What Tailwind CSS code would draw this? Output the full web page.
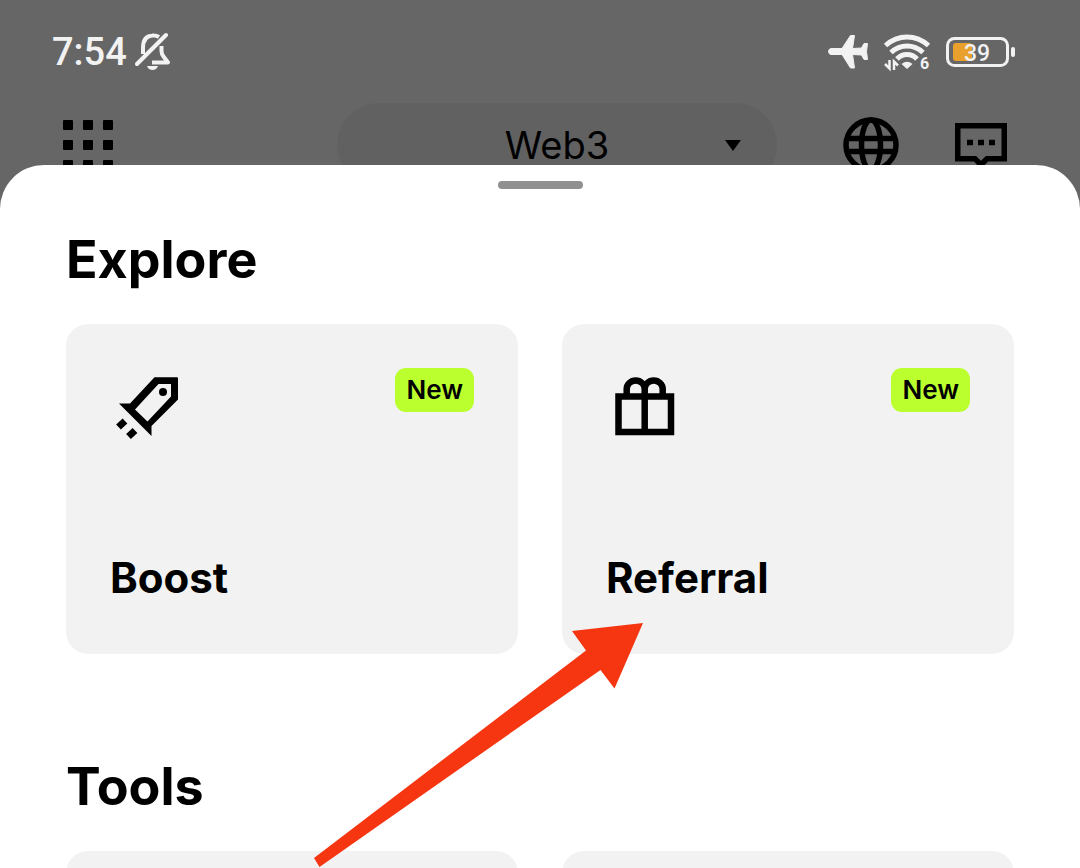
<!DOCTYPE html>
<html lang="en">
<head>
  <meta charset="UTF-8">
  <meta name="viewport" content="width=device-width, initial-scale=1.0">
  <title>Web3 - Explore</title>
  <script src="https://cdn.jsdelivr.net/npm/@tailwindcss/browser@4"></script>
</head>
<body class="h-screen overflow-hidden bg-[#666] font-['Inter',sans-serif] text-black flex flex-col">
  <!-- Status bar -->
  <div class="shrink-0 h-[103px] pt-px pl-[52px] pr-16 flex items-center justify-between font-['Roboto',sans-serif] text-[#f2f2f2]">
    <div class="flex items-center gap-2">
      <span class="text-[38px] leading-10 font-medium">7:54</span>
      <svg class="w-9 h-10" viewBox="0 0 36 40" fill="none" stroke="currentColor" stroke-width="4" stroke-linecap="round" stroke-linejoin="round">
        <path d="M2 32 31 3"/>
        <path d="M8 22v-6C8 8 11 4 17 3.500q4-.5 7 1.500" stroke-linecap="butt"/>
        <path d="M26.500 14v5q0 3 2 5.500l4.500 6H17" stroke-linecap="butt"/>
        <path d="M12 34h11q-1.500 4-5.500 4T12 34z" fill="currentColor" stroke="none"/>
      </svg>
    </div>
    <div class="flex items-center gap-[15px]">
      <svg class="w-10 h-9" viewBox="0 0 40 36" fill="currentColor" stroke="currentColor" stroke-width="1" stroke-linejoin="round">
        <path d="M3 14.500h11L22.500 1.500h4L24.500 14.500l9-.5 2.500-4.500h3.500l-1 8 1 8H36L33.500 21l-9-.5 2 13.500h-4L14 20.500H3q-2.500-.5-2.500-3t2.500-3z"/>
      </svg>
      <svg class="w-12 h-[38px] overflow-visible" viewBox="0 0 48 38" fill="none" stroke="currentColor" stroke-width="5">
        <path d="M2.500 12.500Q12 4 24 4t21.500 8.500"/>
        <path d="M8 19.500q7-6.500 16-6.500t16 6.500"/>
        <path d="M14 26q4-4.500 10-4.500T34 26"/>
        <path d="M18.500 31q5.500-4.500 11 0L24 36z" fill="currentColor" stroke="none"/>
        <path d="M6.500 27v8.500L2 31M11 37v-8.500l4 4" stroke-width="2.500"/>
        <text x="37" y="36" font-size="16" font-weight="700" fill="currentColor" stroke="none">6</text>
      </svg>
      <svg class="w-[70px] h-[30px] overflow-visible" viewBox="0 0 70 30" fill="none">
        <rect x="1.500" y="1.500" width="60" height="27" rx="7" stroke="currentColor" stroke-width="3"/>
        <rect x="7" y="6" width="19" height="18" rx="3" fill="#e9a02c"/>
        <rect x="65" y="10" width="4" height="10" rx="2" fill="currentColor"/>
        <text x="18" y="24" font-size="23" font-weight="500" fill="currentColor">39</text>
      </svg>
    </div>
  </div>

  <!-- Top bar, half hidden by the sheet -->
  <header class="shrink-0 h-[84px] pl-[63px] pr-[73px] flex items-center">
    <button type="button" aria-label="Menu">
      <svg class="w-[50px] h-[50px]" viewBox="0 0 50 50">
        <rect width="10" height="10" rx="1"/><rect x="20" width="10" height="10" rx="1"/><rect x="40" width="10" height="10" rx="1"/>
        <rect y="20" width="10" height="10" rx="1"/><rect x="20" y="20" width="10" height="10" rx="1"/><rect x="40" y="20" width="10" height="10" rx="1"/>
        <rect y="40" width="10" height="10" rx="1"/><rect x="20" y="40" width="10" height="10" rx="1"/><rect x="40" y="40" width="10" height="10" rx="1"/>
      </svg>
    </button>
    <button type="button" class="relative flex-1 h-full ml-56 mr-[66px] rounded-full bg-[#616161] text-[38px] leading-10">
      Web3
      <svg class="absolute right-9 top-1/2 -translate-y-1/2 w-4 h-3" viewBox="0 0 16 12"><path d="M0 1h16L8 12z"/></svg>
    </button>
    <div class="flex items-center gap-14">
      <button type="button" aria-label="Language">
        <svg class="w-14 h-14" viewBox="0 0 56 56" fill="none" stroke="currentColor" stroke-width="5.500">
          <circle cx="28" cy="28" r="25"/>
          <ellipse cx="28" cy="28" rx="9.500" ry="25"/>
          <path d="M4 21.500h48M4 34.500h48"/>
        </svg>
      </button>
      <button type="button" aria-label="Messages">
        <svg class="w-[52px] h-11" viewBox="0 0 52 44" fill="none" stroke="currentColor" stroke-width="5.500">
          <path d="M2.750 2.750h46.500v33H32l-6 6-6-6H2.750z"/>
          <path d="M12 19.500h6M23 19.500h6M34 19.500h6"/>
        </svg>
      </button>
    </div>
  </header>

  <!-- Bottom sheet -->
  <main class="relative grow shrink-0 -mt-[22px] pt-4 px-[66px] pb-11 rounded-t-[44px] bg-white">
    <div class="w-[85px] h-2 mx-auto rounded-full bg-[#909090]"></div>

    <section class="mt-[38px]">
      <h2 class="text-[52px] leading-[66px] font-bold">Explore</h2>
      <div class="grid grid-cols-2 gap-11 mt-[31px]">
        <a href="#boost" class="h-[330px] p-11 rounded-[22px] bg-[#f2f2f2] flex flex-col justify-between">
          <div class="flex items-start justify-between">
            <svg class="w-[77px] h-[77px]" viewBox="0 0 77 77">
              <path fill-rule="evenodd" d="M44.500 9.300h22.500q1 0 1 1V31.500L41.500 58v10L9 35.500h11zM48.500 16 25 41.500 37.500 53.500 61 28.500V16z"/>
              <circle cx="53" cy="24" r="4"/>
              <path d="M8.500 59l6.500-6M18.500 68.500l6.500-6" stroke="currentColor" stroke-width="7"/>
            </svg>
            <span class="h-11 px-[11px] rounded-[11px] bg-[#bcff2f] text-[26px] leading-[44px] font-semibold">New</span>
          </div>
          <h3 class="text-[42px] leading-[64px] font-bold">Boost</h3>
        </a>
        <a href="#referral" class="h-[330px] p-11 rounded-[22px] bg-[#f2f2f2] flex flex-col justify-between">
          <div class="flex items-start justify-between">
            <svg class="w-[77px] h-[77px]" viewBox="0 0 77 77" fill="none" stroke="currentColor" stroke-width="6.500">
              <rect x="12.500" y="28.500" width="52.500" height="35.500"/>
              <path d="M38.700 28v36M20.700 28v-7a9 8.500 0 0 1 18 0v7M38.700 28v-7a9 8.500 0 0 1 18 0v7"/>
            </svg>
            <span class="h-11 px-[11px] rounded-[11px] bg-[#bcff2f] text-[26px] leading-[44px] font-semibold">New</span>
          </div>
          <h3 class="text-[42px] leading-[64px] font-bold">Referral</h3>
        </a>
      </div>
    </section>

    <section class="mt-[100px]">
      <h2 class="text-[52px] leading-[66px] font-bold">Tools</h2>
      <div class="grid grid-cols-2 gap-11 mt-[31px]">
        <div class="h-[330px] rounded-[22px] bg-[#f2f2f2]"></div>
        <div class="h-[330px] rounded-[22px] bg-[#f2f2f2]"></div>
      </div>
    </section>

    <!-- Arrow pointing to Referral -->
    <svg class="absolute left-[314px] top-[458px] w-[330px] h-[244px] pointer-events-none" viewBox="0 0 330 244">
      <path fill="#f63511" d="M329 0 258 8l14 19.500L0 235l5.500 9L286.500 47l14 18.500z"/>
    </svg>
  </main>
</body>
</html>
